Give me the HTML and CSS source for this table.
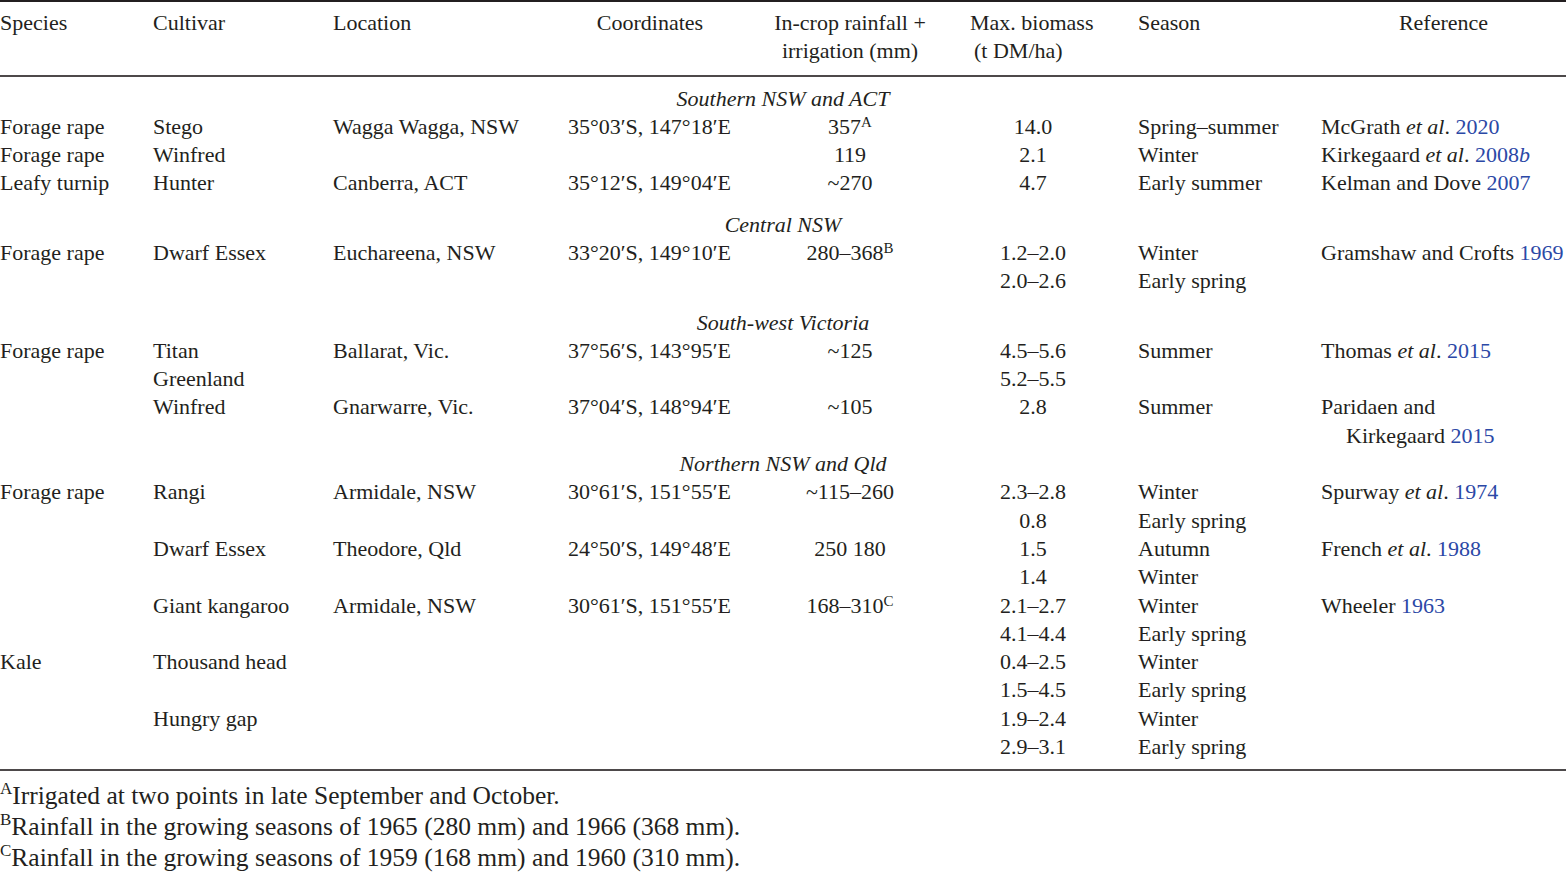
FILE: index.html
```html
<!DOCTYPE html>
<html lang="en">
<head>
<meta charset="utf-8">
<title>Forage brassica biomass</title>
<link rel="stylesheet" href="styles.css">
</head>
<body>
<div class="tbl">
<table class="data">
<colgroup>
<col class="c-species"><col class="c-cult"><col class="c-loc"><col class="c-coord"><col class="c-rain"><col class="c-bio"><col class="c-season"><col class="c-ref">
</colgroup>
<thead>
<tr>
<th class="l">Species</th>
<th class="l">Cultivar</th>
<th class="l">Location</th>
<th class="c">Coordinates</th>
<th class="c">In-crop rainfall +<br>irrigation (mm)</th>
<th class="bio"><span class="b1">Max. biomass</span><span class="b2">(t DM/ha)</span></th>
<th class="season">Season</th>
<th class="c">Reference</th>
</tr>
</thead>
<tbody>
<tr><td class="group first" colspan="8">Southern NSW and ACT</td></tr>
<tr><td>Forage rape</td><td>Stego</td><td>Wagga Wagga, NSW</td><td>35°03′S, 147°18′E</td><td class="c">357<sup class="s">A</sup></td><td class="c">14.0</td><td class="season">Spring–summer</td><td class="ref">McGrath <em>et al</em>. <span class="ln">2020</span></td></tr>
<tr><td>Forage rape</td><td>Winfred</td><td></td><td></td><td class="c">119</td><td class="c">2.1</td><td class="season">Winter</td><td class="ref">Kirkegaard <em>et al</em>. <span class="ln">2008<em>b</em></span></td></tr>
<tr><td>Leafy turnip</td><td>Hunter</td><td>Canberra, ACT</td><td>35°12′S, 149°04′E</td><td class="c">~270</td><td class="c">4.7</td><td class="season">Early summer</td><td class="ref">Kelman and Dove <span class="ln">2007</span></td></tr>

<tr><td class="group" colspan="8">Central NSW</td></tr>
<tr><td>Forage rape</td><td>Dwarf Essex</td><td>Euchareena, NSW</td><td>33°20′S, 149°10′E</td><td class="c">280–368<sup class="s">B</sup></td><td class="c">1.2–2.0</td><td class="season">Winter</td><td class="ref">Gramshaw and Crofts <span class="ln">1969</span></td></tr>
<tr><td></td><td></td><td></td><td></td><td></td><td class="c">2.0–2.6</td><td class="season">Early spring</td><td></td></tr>

<tr><td class="group" colspan="8">South-west Victoria</td></tr>
<tr><td>Forage rape</td><td>Titan</td><td>Ballarat, Vic.</td><td>37°56′S, 143°95′E</td><td class="c">~125</td><td class="c">4.5–5.6</td><td class="season">Summer</td><td class="ref">Thomas <em>et al</em>. <span class="ln">2015</span></td></tr>
<tr><td></td><td>Greenland</td><td></td><td></td><td></td><td class="c">5.2–5.5</td><td></td><td></td></tr>
<tr><td></td><td>Winfred</td><td>Gnarwarre, Vic.</td><td>37°04′S, 148°94′E</td><td class="c">~105</td><td class="c">2.8</td><td class="season">Summer</td><td class="ref">Paridaen and<br>Kirkegaard <span class="ln">2015</span></td></tr>

<tr><td class="group tight" colspan="8">Northern NSW and Qld</td></tr>
<tr><td>Forage rape</td><td>Rangi</td><td>Armidale, NSW</td><td>30°61′S, 151°55′E</td><td class="c">~115–260</td><td class="c">2.3–2.8</td><td class="season">Winter</td><td class="ref">Spurway <em>et al</em>. <span class="ln">1974</span></td></tr>
<tr><td></td><td></td><td></td><td></td><td></td><td class="c">0.8</td><td class="season">Early spring</td><td></td></tr>
<tr><td></td><td>Dwarf Essex</td><td>Theodore, Qld</td><td>24°50′S, 149°48′E</td><td class="c">250 180</td><td class="c">1.5</td><td class="season">Autumn</td><td class="ref">French <em>et al</em>. <span class="ln">1988</span></td></tr>
<tr><td></td><td></td><td></td><td></td><td></td><td class="c">1.4</td><td class="season">Winter</td><td></td></tr>
<tr><td></td><td>Giant kangaroo</td><td>Armidale, NSW</td><td>30°61′S, 151°55′E</td><td class="c">168–310<sup class="s">C</sup></td><td class="c">2.1–2.7</td><td class="season">Winter</td><td class="ref">Wheeler <span class="ln">1963</span></td></tr>
<tr><td></td><td></td><td></td><td></td><td></td><td class="c">4.1–4.4</td><td class="season">Early spring</td><td></td></tr>
<tr><td>Kale</td><td>Thousand head</td><td></td><td></td><td></td><td class="c">0.4–2.5</td><td class="season">Winter</td><td></td></tr>
<tr><td></td><td></td><td></td><td></td><td></td><td class="c">1.5–4.5</td><td class="season">Early spring</td><td></td></tr>
<tr><td></td><td>Hungry gap</td><td></td><td></td><td></td><td class="c">1.9–2.4</td><td class="season">Winter</td><td></td></tr>
<tr><td></td><td></td><td></td><td></td><td></td><td class="c">2.9–3.1</td><td class="season">Early spring</td><td></td></tr>
</tbody>
</table>
</div>
<div class="notes">
<p class="note"><sup class="fs">A</sup>Irrigated at two points in late September and October.</p>
<p class="note"><sup class="fs">B</sup>Rainfall in the growing seasons of 1965 (280 mm) and 1966 (368 mm).</p>
<p class="note"><sup class="fs">C</sup>Rainfall in the growing seasons of 1959 (168 mm) and 1960 (310 mm).</p>
</div>
</body>
</html>
```
FILE: styles.css
```css
html, body {
  margin: 0;
  padding: 0;
  background: #ffffff;
}
body {
  font-family: "Liberation Serif", "Times New Roman", serif;
  font-size: 22px;
  color: #231f20;
  width: 1566px;
}
.tbl {
  border-top: 2px solid #231f20;
  border-bottom: 2px solid #4d494a;
  padding-bottom: 8px;
}
.data {
  width: 1566px;
  table-layout: fixed;
  border-collapse: separate;
  border-spacing: 0;
}
.c-species { width: 153px; }
.c-cult { width: 180px; }
.c-loc { width: 235px; }
.c-coord { width: 164px; }
.c-rain { width: 236px; }
.c-bio { width: 130px; }
.c-season { width: 223px; }
.c-ref { width: 245px; }

th {
  font-weight: normal;
  vertical-align: top;
  line-height: 28.5px;
  padding: 6.5px 0 9.5px 0;
  border-bottom: 2px solid #4d494a;
  white-space: nowrap;
}
td {
  vertical-align: top;
  line-height: 28.3px;
  padding: 0;
  white-space: nowrap;
  text-align: left;
}
.l { text-align: left; }
.c { text-align: center; }
th.bio { text-align: left; padding-left: 2px; }
.b1, .b2 { display: block; }
.b2 { padding-left: 4px; }
.season { text-align: left; padding-left: 40px; }
th.season { padding-left: 40px; }
.ref { padding-left: 25px; text-indent: -25px; }

.group {
  text-align: center;
  font-style: italic;
  padding-top: 13px;
}
.group.first { padding-top: 7.5px; }
.group.tight { padding-top: 0; }

.s {
  font-size: 15px;
  line-height: 0;
  vertical-align: 7px;
}
.ln { color: #2b48a6; }

.notes {
  margin-top: 9px;
  font-size: 25.5px;
  line-height: 31px;
}
.note { margin: 0; white-space: nowrap; }
.fs {
  font-size: 17px;
  line-height: 0;
  vertical-align: 10px;
}
```
